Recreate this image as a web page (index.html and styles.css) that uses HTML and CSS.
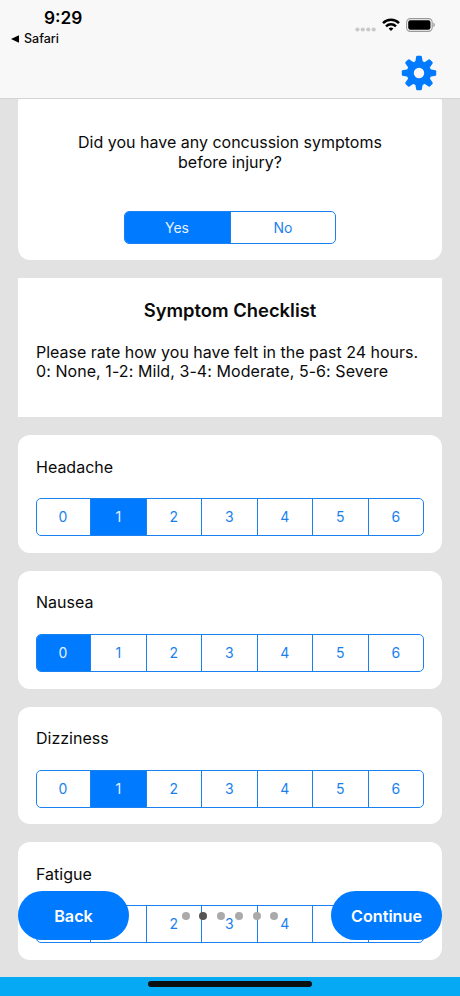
FILE: index.html
```html
<!DOCTYPE html>
<html lang="en">
<head>
    <meta charset="UTF-8">
    <meta name="viewport" content="width=device-width, initial-scale=1.0">
    <title>Symptom Checklist</title>
    <link rel="stylesheet" href="styles.css">
</head>
<body>
    <header>
        <div class="status-left">
            <div class="clock">9:29</div>
            <div class="back-app">
                <svg width="8" height="8" viewBox="0 0 8 8"><path d="M0 4L8 0.2V7.8Z"/></svg>
                <span>Safari</span>
            </div>
        </div>
        <div class="status-right">
            <div class="status-icons">
                <svg class="signal" width="22" height="5" viewBox="0 0 22 5" fill="#c9c9c9">
                    <circle cx="2.4" cy="2.5" r="2.1"/>
                    <circle cx="7.8" cy="2.5" r="2.1"/>
                    <circle cx="13.3" cy="2.5" r="2.1"/>
                    <circle cx="18.7" cy="2.5" r="2.1"/>
                </svg>
                <svg class="wifi" width="18" height="14" viewBox="0 0 18 14" fill="none" stroke="#000" stroke-width="2.5">
                    <path d="M1 5.1A11.5 11.5 0 0 1 17 5.1"/>
                    <path d="M4 8.3A7.2 7.2 0 0 1 14 8.3"/>
                    <path d="M9 13L6.6 10.6A3.5 3.5 0 0 1 11.4 10.6Z" fill="#000" stroke="none"/>
                </svg>
                <svg class="battery" width="30" height="14" viewBox="0 0 30 14">
                    <rect x="0.6" y="0.6" width="25.6" height="12.8" rx="3.8" fill="none" stroke="#999" stroke-width="1.1"/>
                    <rect x="2.2" y="2.2" width="22.3" height="9.6" rx="2.2"/>
                    <path d="M27.4 4.8C29.2 5.4 29.2 8.6 27.4 9.2Z" fill="#999"/>
                </svg>
            </div>
            <!-- Settings gear -->
            <svg class="gear" width="36" height="36" viewBox="-18 -18 36 36" fill="#007aff">
                <circle r="8.7" fill="none" stroke="#007aff" stroke-width="7"/>
                <g id="teeth">
                    <path id="tooth" d="M-3.8 -11L-2.8 -16.4Q-2.6 -17.2 -1.8 -17.2H1.8Q2.6 -17.2 2.8 -16.4L3.8 -11Z"/>
                    <use href="#tooth" transform="rotate(45)"/>
                    <use href="#tooth" transform="rotate(90)"/>
                    <use href="#tooth" transform="rotate(135)"/>
                    <use href="#tooth" transform="rotate(180)"/>
                    <use href="#tooth" transform="rotate(225)"/>
                    <use href="#tooth" transform="rotate(270)"/>
                    <use href="#tooth" transform="rotate(315)"/>
                </g>
            </svg>
        </div>
    </header>

    <main>
        <section class="card question">
            <p>Did you have any concussion symptoms<br>before injury?</p>
            <div class="segmented small">
                <div class="segment selected">Yes</div>
                <div class="segment">No</div>
            </div>
        </section>

        <section class="intro">
            <h2>Symptom Checklist</h2>
            <p>Please rate how you have felt in the past 24 hours.<br><span class="scale">0: None, 1-2: Mild, 3-4: Moderate, 5-6: Severe</span></p>
        </section>

        <section class="card symptom">
            <h3>Headache</h3>
            <div class="segmented">
                <div class="segment">0</div>
                <div class="segment selected">1</div>
                <div class="segment">2</div>
                <div class="segment">3</div>
                <div class="segment">4</div>
                <div class="segment">5</div>
                <div class="segment">6</div>
            </div>
        </section>

        <section class="card symptom">
            <h3>Nausea</h3>
            <div class="segmented">
                <div class="segment selected">0</div>
                <div class="segment">1</div>
                <div class="segment">2</div>
                <div class="segment">3</div>
                <div class="segment">4</div>
                <div class="segment">5</div>
                <div class="segment">6</div>
            </div>
        </section>

        <section class="card symptom">
            <h3>Dizziness</h3>
            <div class="segmented">
                <div class="segment">0</div>
                <div class="segment selected">1</div>
                <div class="segment">2</div>
                <div class="segment">3</div>
                <div class="segment">4</div>
                <div class="segment">5</div>
                <div class="segment">6</div>
            </div>
        </section>

        <section class="card symptom">
            <h3>Fatigue</h3>
            <div class="segmented">
                <div class="segment"></div>
                <div class="segment"></div>
                <div class="segment">2</div>
                <div class="segment">3</div>
                <div class="segment">4</div>
                <div class="segment"></div>
                <div class="segment"></div>
            </div>
        </section>
    </main>

    <!-- Floating page controls -->
    <div class="pager">
        <button class="pill">Back</button>
        <div class="dots">
            <span class="dot"></span>
            <span class="dot current"></span>
            <span class="dot"></span>
            <span class="dot"></span>
            <span class="dot"></span>
            <span class="dot"></span>
        </div>
        <button class="pill">Continue</button>
    </div>

    <footer>
        <div class="home-indicator"></div>
    </footer>
</body>
</html>
```
FILE: styles.css
```css
* {
    box-sizing: border-box;
}

body {
    margin: 0;
    height: 996px;
    display: flex;
    flex-direction: column;
    position: relative;
    overflow: hidden;
    font-family: Inter, "Liberation Sans", sans-serif;
    font-size: 16px;
    background-color: #e2e2e2;
    color: #0a0a0a;
}

header {
    height: 99px;
    flex: none;
    background-color: #f8f8f8;
    border-bottom: 1px solid #d4d4d4;
    display: flex;
    justify-content: space-between;
}

.status-left {
    padding: 7px 0 0 11px;
}

.clock {
    padding-left: 33px;
    font-size: 17.3px;
    line-height: 21px;
    font-weight: 600;
    color: #000;
}

.back-app {
    display: flex;
    align-items: center;
    gap: 5px;
    margin-top: 2px;
    font-size: 12.5px;
    line-height: 17px;
    font-weight: 500;
}

.status-right {
    display: flex;
    flex-direction: column;
    align-items: flex-end;
    padding: 18px 23px 0 0;
}

.status-icons {
    display: flex;
    align-items: flex-start;
    height: 14px;
    margin-right: 1px;
}

.signal {
    margin: 9px 5px 0 0;
}

.wifi {
    margin-right: 6px;
}

.gear {
    margin-top: 23px;
}

main {
    flex: 1;
    min-height: 0;
    overflow: hidden;
    padding: 0 18px;
}

.card {
    background-color: #fff;
    border-radius: 12px;
    margin-bottom: 18px;
}

p {
    margin: 0;
    line-height: 19.5px;
}

.question {
    height: 161px;
    border-radius: 2px 2px 12px 12px;
    padding-top: 34px;
    text-align: center;
}

.intro {
    height: 139px;
    margin-bottom: 18px;
    padding: 20px 18px 0;
    background-color: #fff;
}

.scale {
    letter-spacing: 0.07px;
}

h2 {
    margin: 0 0 20.6px;
    font-size: 18.4px;
    line-height: 24px;
    font-weight: 600;
    text-align: center;
}

.symptom {
    height: 117.8px;
    padding: 21.5px 18px 0;
}

h3 {
    margin: 0 0 21.5px;
    font-size: 16px;
    line-height: 20px;
    font-weight: 400;
}

.segmented {
    display: flex;
    height: 38px;
    border: 1px solid #1a82f0;
    border-radius: 5px;
    overflow: hidden;
    color: #1a7fee;
    font-size: 14px;
}

.segment {
    flex: 1;
    display: flex;
    align-items: center;
    justify-content: center;
    padding-bottom: 1px;
}

.segment:first-child {
    flex: 0 0 53px;
    padding-right: 1px;
}

.segment + .segment {
    border-left: 1px solid #1a82f0;
}

.selected {
    background-color: #007aff;
    color: #e6f2ff;
}

.small {
    width: 212px;
    height: 33px;
    margin: 39px auto 0;
}

.small .segment:first-child {
    flex-basis: 105px;
}

.pager {
    position: absolute;
    left: 18px;
    right: 18px;
    top: 891px;
    display: flex;
    justify-content: space-between;
    align-items: center;
}

.pill {
    width: 111px;
    height: 49px;
    padding: 0;
    border: none;
    border-radius: 25px;
    background-color: #007aff;
    color: #fff;
    font-family: inherit;
    font-size: 16.2px;
    font-weight: 600;
}

.dots {
    display: flex;
    gap: 9.7px;
}

.dot {
    width: 8px;
    height: 8px;
    border-radius: 50%;
    background-color: #aaa;
}

.current {
    background-color: #555;
}

footer {
    height: 19px;
    flex: none;
    padding-top: 4px;
    background-color: #05a9f4;
}

.home-indicator {
    width: 164px;
    height: 6px;
    margin: 0 auto;
    border-radius: 3px;
    background-color: #0b0f12;
}
```
